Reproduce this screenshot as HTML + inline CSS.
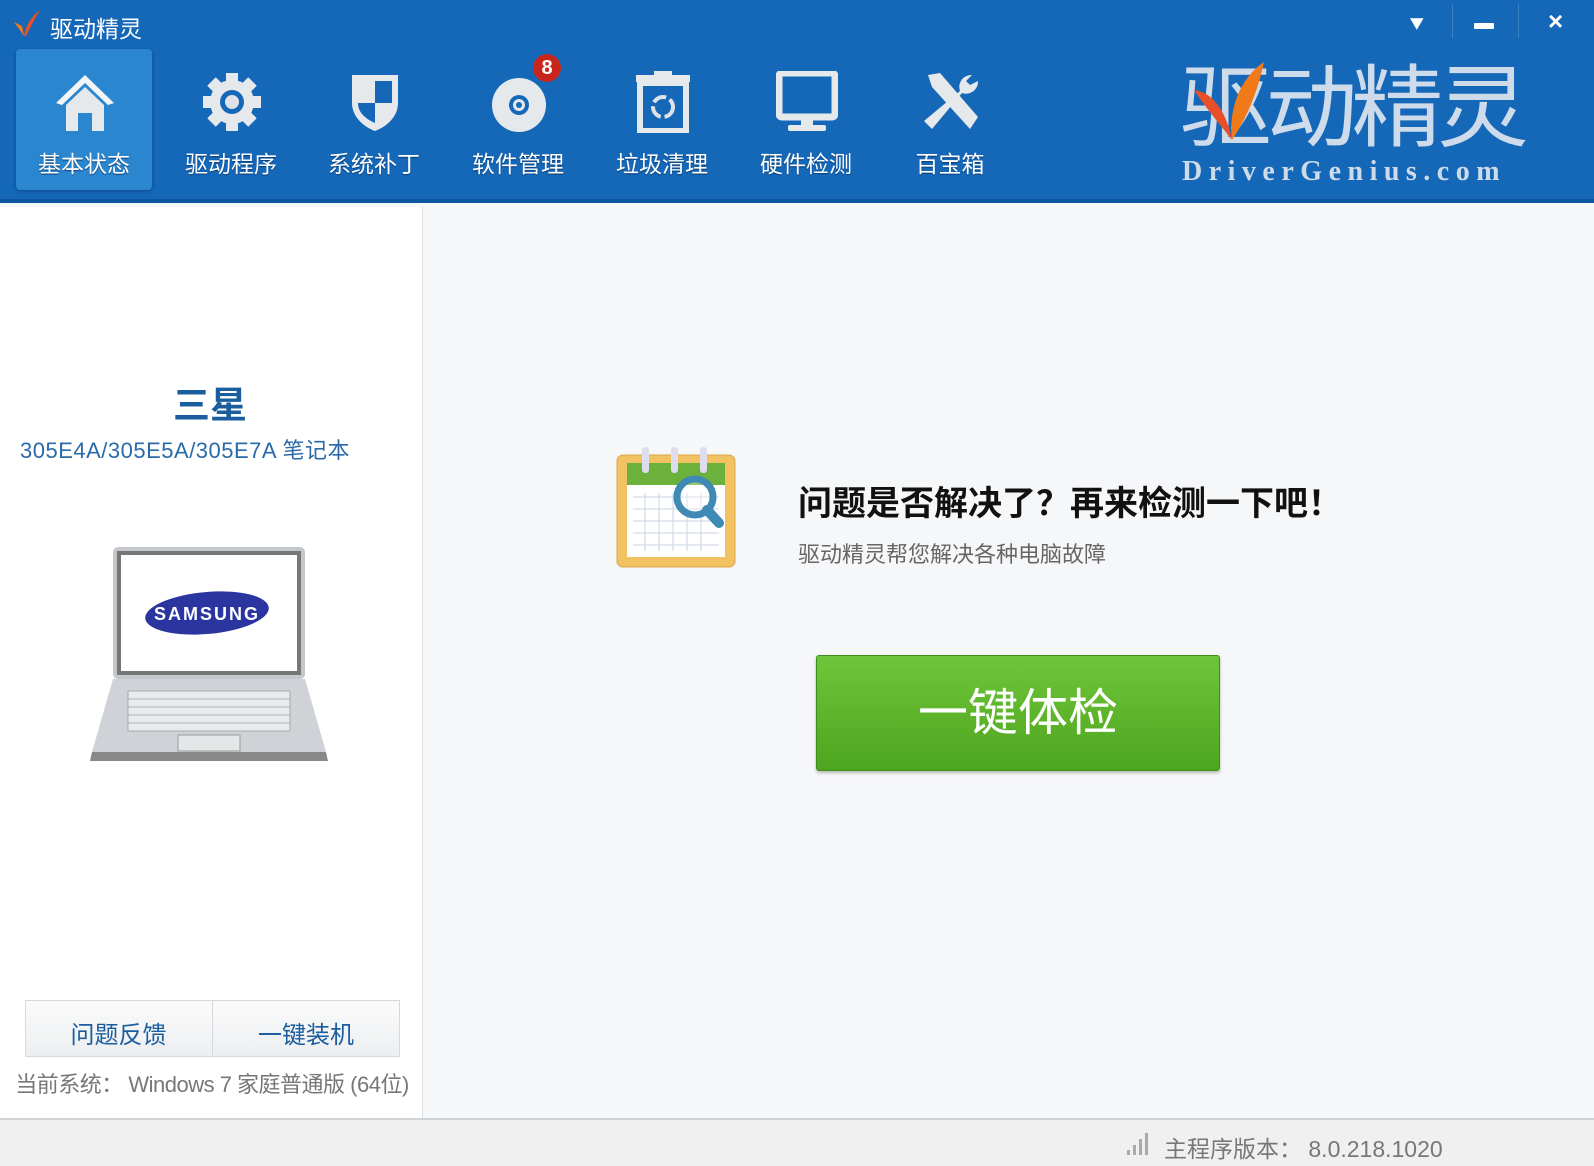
<!DOCTYPE html>
<html><head><meta charset="utf-8"><style>
*{margin:0;padding:0;box-sizing:border-box}
body{width:1594px;height:1166px;overflow:hidden;font-family:"Liberation Sans","Noto Sans CJK SC",sans-serif;background:#f6f7f9;position:relative}
.hdr{position:absolute;left:0;top:0;width:1594px;height:203px;background:#1567b8;border-bottom:4px solid #0f56a0}
.ab{position:absolute}
.tab{position:absolute;top:49px;width:136px;height:141px;text-align:center;color:#fff;font-size:23px}
.tab .lb{position:absolute;top:96px;left:0;width:100%;text-shadow:0 1px 1px #0a3f75}
.tab svg{position:absolute;left:38px;top:22px}
.act{background:#2b86d0;border-radius:4px;box-shadow:0 1px 3px #0b4a8a}
.side{position:absolute;left:0;top:207px;width:423px;height:911px;background:#fff;border-right:1px solid #dde0e4}
.foot{position:absolute;left:0;top:1118px;width:1594px;height:48px;background:#f0f0f0;border-top:2px solid #cfd2d6}
</style></head><body>
<div class="hdr">
 <svg class="ab" style="left:10px;top:8px" width="32" height="32" viewBox="0 0 32 32"><path d="M4 14 L14 28 L12 18Z" fill="#f07a1a"/><path d="M14 28 C16 16 22 8 30 2 C24 12 20 20 16 28Z" fill="#e8502a"/></svg>
 <div class="ab" style="left:50px;top:10px;color:#fff;font-size:23px">驱动精灵</div>
 <div class="ab" style="left:1408px;top:12px;color:#fff;font-size:22px;font-weight:bold">⯆</div>
 <div class="ab" style="left:1452px;top:4px;width:1px;height:34px;background:#3a80c4"></div>
 <div class="ab" style="left:1474px;top:23px;width:20px;height:6px;background:#fff;border-radius:1px"></div>
 <div class="ab" style="left:1518px;top:4px;width:1px;height:34px;background:#3a80c4"></div>
 <div class="ab" style="left:1548px;top:6px;color:#fff;font-size:26px;font-weight:bold">×</div>

 <div class="tab act" style="left:16px"><svg width="62" height="62" viewBox="0 0 62 62"><path d="M31 4 L2 32 L8 34 L31 12 L54 34 L60 32Z" fill="#f2f4f6"/><path d="M12 34 L31 16 L50 34 L50 60 L38 60 L38 42 L24 42 L24 60 L12 60Z" fill="#e6e9ec"/></svg><div class="lb">基本状态</div></div>
 <div class="tab" style="left:163px"><svg width="62" height="62" viewBox="0 0 62 62"><g fill="#e6e9ec"><circle cx="31" cy="31" r="22"/><rect x="25" y="2" width="12" height="58"/><rect x="2" y="25" width="58" height="12"/><rect x="25" y="2" width="12" height="58" transform="rotate(45 31 31)"/><rect x="25" y="2" width="12" height="58" transform="rotate(-45 31 31)"/></g><circle cx="31" cy="31" r="12" fill="#1567b8"/><circle cx="31" cy="31" r="7" fill="#dfe3e7"/></svg><div class="lb">驱动程序</div></div>
 <div class="tab" style="left:306px"><svg width="62" height="62" viewBox="0 0 62 62"><path d="M8 4 L54 4 L54 32 C54 46 42 56 31 60 C20 56 8 46 8 32Z" fill="#e6e9ec"/><path d="M31 10 L48 10 L48 32 L31 32Z M14 32 L31 32 L31 52 C22 48 14 42 14 32Z" fill="#1567b8"/></svg><div class="lb">系统补丁</div></div>
 <div class="tab" style="left:450px"><svg width="62" height="62" viewBox="0 0 62 62"><circle cx="31" cy="34" r="27" fill="#e6e9ec"/><circle cx="31" cy="34" r="10" fill="#1567b8"/><circle cx="31" cy="34" r="6" fill="#e6e9ec"/><circle cx="31" cy="34" r="3" fill="#1567b8"/></svg><div class="lb">软件管理</div></div>
 <div class="ab" style="left:533px;top:54px;width:28px;height:28px;border-radius:50%;background:#c8261c;color:#fff;font-size:20px;font-weight:bold;text-align:center;line-height:28px">8</div>
 <div class="tab" style="left:594px"><svg width="62" height="62" viewBox="0 0 62 62"><rect x="4" y="4" width="54" height="7" fill="#e6e9ec"/><rect x="22" y="0" width="18" height="6" fill="#e6e9ec"/><rect x="8" y="12" width="46" height="48" fill="none" stroke="#e6e9ec" stroke-width="6"/><circle cx="31" cy="36" r="10" fill="none" stroke="#dfe3e7" stroke-width="4" stroke-dasharray="14 4"/></svg><div class="lb">垃圾清理</div></div>
 <div class="tab" style="left:738px"><svg width="62" height="62" viewBox="0 0 62 62"><rect x="3" y="2" width="56" height="44" rx="3" fill="none" stroke="#e6e9ec" stroke-width="7"/><rect x="25" y="46" width="12" height="8" fill="#e6e9ec"/><rect x="12" y="54" width="38" height="6" rx="2" fill="#e6e9ec"/></svg><div class="lb">硬件检测</div></div>
 <div class="tab" style="left:882px"><svg width="62" height="62" viewBox="0 0 62 62"><path d="M8 4 L20 2 L58 46 L50 58 L12 16Z" fill="#e6e9ec"/><path d="M52 4 A12 12 0 0 0 40 20 L4 50 L12 58 L42 22 A12 12 0 0 0 58 10 L50 14 L46 10Z" fill="#e6e9ec"/></svg><div class="lb">百宝箱</div></div>

 <div class="ab" style="left:1180px;top:64px;color:#cddbeb;font-size:90px;line-height:90px;letter-spacing:-6px;font-weight:normal;transform:scaleX(1.02);transform-origin:left">驱动精灵</div>
 <svg class="ab" style="left:1192px;top:60px" width="90" height="90" viewBox="0 0 90 90"><path d="M2 30 C20 32 34 50 40 80 C26 62 14 48 2 30Z" fill="#e8502a"/><path d="M40 80 C36 50 48 18 72 2 C66 30 56 56 40 80Z" fill="#f07a1a"/></svg>
 <div class="ab" style="left:1182px;top:156px;color:#cddbeb;font-size:28px;font-family:'Liberation Serif',serif;font-weight:bold;letter-spacing:6.5px">DriverGenius.com</div>
</div>

<div class="side">
 <div class="ab" style="left:0;top:168px;width:420px;text-align:center;color:#1b5e9f;font-size:37px;font-weight:bold">三星</div>
 <div class="ab" style="left:20px;top:226px;width:380px;text-align:left;color:#2a6aa8;font-size:22px;letter-spacing:0.5px">305E4A/305E5A/305E7A 笔记本</div>
 <svg class="ab" style="left:88px;top:340px" width="244" height="222" viewBox="0 0 244 222"><rect x="25" y="0" width="192" height="132" rx="5" fill="#c4c7cb"/><rect x="29" y="4" width="184" height="124" fill="#777"/><rect x="33" y="8" width="176" height="116" fill="#fff"/><ellipse cx="119" cy="66" rx="62" ry="21" fill="#2a35a0" transform="rotate(-5 119 66)"/><text x="119" y="73" text-anchor="middle" fill="#fff" font-size="18" font-weight="bold" font-family="Liberation Sans" letter-spacing="2">SAMSUNG</text><path d="M25 132 L217 132 L238 205 L4 205Z" fill="#cfd2d6"/><path d="M4 205 L238 205 L240 214 L2 214Z" fill="#888"/><rect x="40" y="144" width="162" height="40" fill="#e8eaec" stroke="#aaa"/><g stroke="#b0b3b7"><line x1="40" y1="152" x2="202" y2="152"/><line x1="40" y1="160" x2="202" y2="160"/><line x1="40" y1="168" x2="202" y2="168"/><line x1="40" y1="176" x2="202" y2="176"/></g><rect x="90" y="188" width="62" height="16" fill="#e4e6e8" stroke="#999"/></svg>
 <div class="ab" style="left:25px;top:793px;width:375px;height:57px;border:1px solid #d6d8db;background:linear-gradient(#fbfbfb,#eceef0)"></div>
 <div class="ab" style="left:212px;top:793px;width:1px;height:57px;background:#d6d8db"></div>
 <div class="ab" style="left:25px;top:808px;width:187px;text-align:center;color:#1b5e9f;font-size:24px">问题反馈</div>
 <div class="ab" style="left:212px;top:808px;width:188px;text-align:center;color:#1b5e9f;font-size:24px">一键装机</div>
 <div class="ab" style="left:10px;top:864px;width:404px;color:#777;font-size:22px;line-height:28px;height:40px;overflow:hidden;text-align:center;letter-spacing:-0.5px">当前系统： Windows 7 家庭普通版 (64位)</div>
</div>

<svg class="ab" style="left:615px;top:447px" width="122" height="122" viewBox="0 0 122 122"><rect x="2" y="8" width="118" height="112" rx="6" fill="#f2c262" stroke="#daa84a"/><rect x="12" y="16" width="98" height="94" fill="#fff"/><rect x="12" y="16" width="98" height="22" fill="#6cb13c"/><g stroke="#c9d3e0"><path d="M18 50 H104 M18 62 H104 M18 74 H104 M18 86 H104 M18 98 H104 M30 46 V104 M44 46 V104 M58 46 V104 M72 46 V104 M86 46 V104"/></g><g fill="#dde"><rect x="27" y="0" width="7" height="26" rx="3"/><rect x="56" y="0" width="7" height="26" rx="3"/><rect x="85" y="0" width="7" height="26" rx="3"/></g><circle cx="80" cy="50" r="18" fill="rgba(255,255,255,.3)" stroke="#3e8ab5" stroke-width="7"/><path d="M92 63 L104 76" stroke="#3e8ab5" stroke-width="10" stroke-linecap="round"/></svg>
<div class="ab" style="left:798px;top:476px;color:#111;font-size:34px;font-weight:bold">问题是否解决了？再来检测一下吧！</div>
<div class="ab" style="left:798px;top:537px;color:#666;font-size:22px">驱动精灵帮您解决各种电脑故障</div>
<div class="ab" style="left:816px;top:655px;width:404px;height:116px;border-radius:3px;background:linear-gradient(#6fc63a,#4ea51f);border:1px solid #3f8e1a;box-shadow:0 2px 3px rgba(0,0,0,.25);color:#fff;font-size:50px;text-align:center;line-height:114px">一键体检</div>

<div class="foot">
 <svg class="ab" style="left:1126px;top:12px" width="22" height="24" viewBox="0 0 22 24"><g fill="#aaa"><rect x="1" y="18" width="3" height="5"/><rect x="7" y="13" width="3" height="10"/><rect x="13" y="7" width="3" height="16"/><rect x="19" y="1" width="3" height="22"/></g></svg>
 <div class="ab" style="left:1164px;top:10px;color:#777;font-size:23px">主程序版本： 8.0.218.1020</div>
</div>
</body></html>
